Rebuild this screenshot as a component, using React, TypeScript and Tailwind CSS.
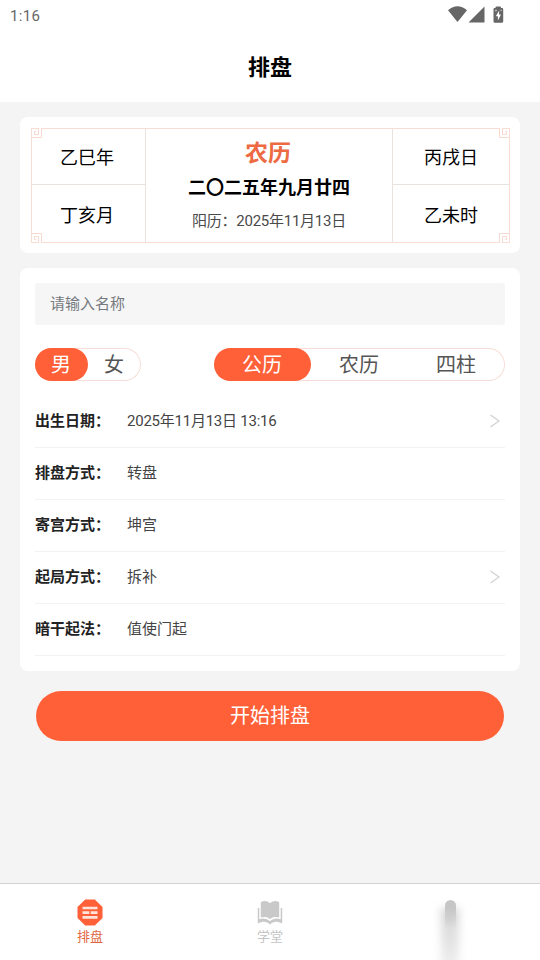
import React from "react";

const rows = [
  { label: "出生日期：", value: "2025年11月13日 13:16", arrow: true },
  { label: "排盘方式：", value: "转盘", arrow: false },
  { label: "寄宫方式：", value: "坤宫", arrow: false },
  { label: "起局方式：", value: "拆补", arrow: true },
  { label: "暗干起法：", value: "值使门起", arrow: false },
];

function StatusBar() {
  return (
    <div className="flex h-8 items-center justify-between pl-[10px] pr-[35px] text-[#666]">
      <span className="text-[15px] leading-8 tracking-[0.3px]">1:16</span>
      <svg width="58" height="18" viewBox="0 0 58 18" fill="#666" className="-mt-[4px]">
        <path d="M1 5.2Q10.500 -2.500 20 5.200L10.500 17Z" />
        <path d="M37.500 1.500V17.500H21.500Z" />
        <path d="M48.500 3V2.500a1 1 0 0 1 1-1h3.500a1 1 0 0 1 1 1V3h1a1.200 1.200 0 0 1 1.200 1.200V16.500a1.200 1.200 0 0 1-1.200 1.200h-7.300a1.200 1.200 0 0 1-1.200-1.200V4.200A1.200 1.200 0 0 1 47.700 3Z" />
        <path d="M52.200 5.500L48.800 11.300H50.900V15.500L54 9.600H52Z" fill="#fff" />
        <path d="M48.200 4.800h1.500v1.500h-1.500ZM53.500 4.800h1.200v1.200h-1.200Z" fill="#ccc" />
      </svg>
    </div>
  );
}

function Corner({ className }: { className: string }) {
  return (
    <svg
      width="12"
      height="12"
      viewBox="0 0 12 12"
      fill="none"
      stroke="#f8d9d0"
      className={`absolute ${className}`}
    >
      <path d="M8 0.500H10" stroke="#fff" />
      <path d="M0 9.500H10.500V0M7.500 0V6.500H3.500V3.500H5" />
    </svg>
  );
}

function Pillars({ top, bottom, className = "" }: { top: string; bottom: string; className?: string }) {
  return (
    <div className="flex h-full flex-col text-center text-[18px] text-black">
      <div className={`flex h-[56px] items-center justify-center border-b border-[#e9e3df] pt-[2px] ${className}`}>{top}</div>
      <div className={`flex flex-1 items-center justify-center pt-[3px] ${className}`}>{bottom}</div>
    </div>
  );
}

function DateCard() {
  return (
    <section className="h-[136px] rounded-lg bg-white pt-[11px] pr-[10px] pl-[11px]">
      <div className="relative grid h-[115px] grid-cols-[113px_248px_1fr] border border-[#f9ddd5]">
        <Pillars top="乙巳年" bottom="丁亥月" className="pr-[3px]" />
        <div className="flex flex-col items-center border-x border-[#e9e3df]">
          <div className="mt-[8px] mr-[2px] text-[23px] leading-[34px] font-bold text-[#ed6a43]">农历</div>
          <div className="text-[18px] leading-[34px] font-bold text-black">二〇二五年九月廿四</div>
          <div className="text-[15px] leading-[33px] tracking-[-0.25px] text-[#4a4a4a]">阳历：2025年11月13日</div>
        </div>
        <Pillars top="丙戌日" bottom="乙未时" />
        <Corner className="-top-px -left-px" />
        <Corner className="-top-px -right-px -scale-x-100" />
        <Corner className="-bottom-px -left-px -scale-y-100" />
        <Corner className="-right-px -bottom-px -scale-100" />
      </div>
    </section>
  );
}

function FormCard() {
  return (
    <section className="mt-[15px] h-[403px] rounded-lg bg-white px-[15px] pt-[15px]">
      <div className="flex h-[42px] items-center rounded-[3px] bg-[#f6f6f6] px-[15px] text-[15px] text-[#757980]">
        请输入名称
      </div>
      <div className="mt-[23px] flex h-[33px] justify-between text-[20px] text-[#555]">
        <div className="flex w-[106px] rounded-full shadow-[inset_0_0_0_1px_#f7ddd5]">
          <div className="flex w-[53px] items-center justify-center rounded-full bg-[#ff6038] pr-px text-white">男</div>
          <div className="flex w-[53px] items-center justify-center pr-px">女</div>
        </div>
        <div className="flex w-[291px] rounded-full shadow-[inset_0_0_0_1px_#f7ddd5]">
          <div className="flex w-[97px] items-center justify-center rounded-full bg-[#ff6038] pr-px text-white">公历</div>
          <div className="flex w-[97px] items-center justify-center pr-px">农历</div>
          <div className="flex w-[97px] items-center justify-center pr-px">四柱</div>
        </div>
      </div>
      <div className="mt-[15px]">
        {rows.map((row) => (
          <div key={row.label} className="flex h-[52px] items-center border-b border-[#f2f2f2] text-[15px]">
            <span className="w-[92px] font-bold whitespace-nowrap text-[#222]">{row.label}</span>
            <span className={row.value.length > 6 ? "flex-1 tracking-[-0.24px] text-[#444]" : "flex-1 text-[#444]"}>
              {row.value}
            </span>
            {row.arrow && (
              <svg width="10" height="14" viewBox="0 0 10 14" fill="none" stroke="#d0d0d0" strokeWidth="1.200" className="mr-[5px] -mt-[2px]">
                <path d="M0.500 1L9 7L0.500 13" />
              </svg>
            )}
          </div>
        ))}
      </div>
    </section>
  );
}

function TabBar() {
  return (
    <nav className="grid h-[77px] grid-cols-3 border-t border-[#d2d2d2] bg-white text-[13px]">
      <div className="flex flex-col items-center pt-[15px] text-[#df6743]">
        <svg width="26" height="27" viewBox="0 0 26 27">
          <path d="M8.200 0.500H17.800L25.500 8V19L17.800 26.500H8.200L0.500 19V8Z" fill="#ff6038" />
          <path d="M5.500 9H20.500M5.500 13.700H12.300M13.700 13.700H20.500M5.500 18.400H20.500" stroke="#ffe3da" strokeWidth="2.700" />
        </svg>
        <span className="mt-[1px] leading-5">排盘</span>
      </div>
      <div className="flex flex-col items-center pt-[15px] text-[#c4c4c4]">
        <svg width="26" height="27" viewBox="0 0 26 27" fill="#c9c9c9">
          <path d="M13 4.200C10 1.300 6.500 1.300 3.800 3.200V18.500C7 17.500 10 17.500 13 20C16 17.500 19 17.500 22.200 18.500V3.200C19.500 1.300 16 1.300 13 4.200Z" />
          <path d="M0.800 9H2.300V20.200C6.500 18.800 10 19.200 13 22.300C16 19.200 19.500 18.800 23.700 20.200V9H25.200V24.500C20 22 16.500 22 13 25.500C9.500 22 6 22 0.800 24.500Z" />
        </svg>
        <span className="mt-[1px] leading-5">学堂</span>
      </div>
      <div className="flex justify-center overflow-hidden pt-[16px]">
        <div className="relative h-[60px] w-[50px]">
          <div className="absolute top-[8px] left-[16px] h-[66px] w-[18px] bg-linear-to-b from-[#d4d4d4] to-[#f3f3f3] blur-[4px]" />
          <div className="absolute top-0 left-[19.500px] h-[28px] w-[11px] rounded-t-full bg-linear-to-b from-[#c6c6c6] from-30% to-transparent" />
        </div>
      </div>
    </nav>
  );
}

export default function App() {
  return (
    <div lang="zh-CN" className="flex h-[960px] w-[540px] flex-col overflow-hidden bg-[#f4f4f4] font-[Roboto,'Noto_Sans_CJK_SC',sans-serif]">
      <header className="h-[102px] bg-white">
        <StatusBar />
        <h1 className="text-center text-[22px] leading-[72px] font-bold text-black">排盘</h1>
      </header>
      <main className="flex-1 px-5 pt-[15px]">
        <DateCard />
        <FormCard />
        <button className="mx-4 mt-5 flex h-[50px] w-[468px] items-center justify-center rounded-full bg-[#ff6038] text-[20px] text-white">
          开始排盘
        </button>
      </main>
      <TabBar />
    </div>
  );
}
